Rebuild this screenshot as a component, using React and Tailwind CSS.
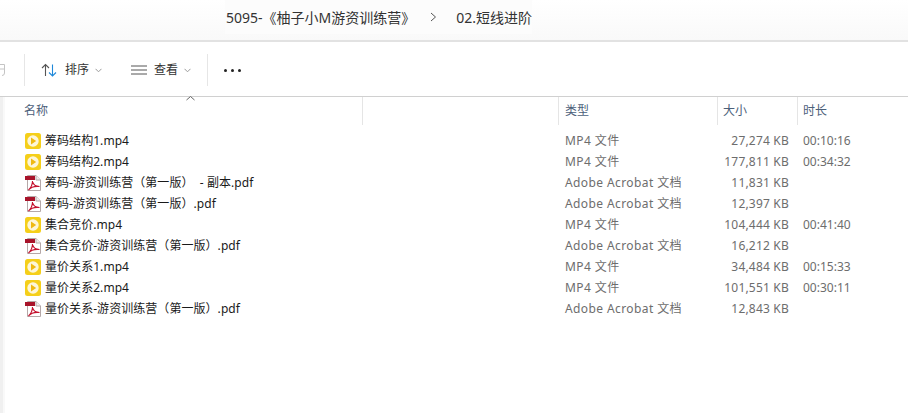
const files = [
  { name: "筹码结构1.mp4", kind: "video", type: "MP4 文件", size: "27,274 KB", time: "00:10:16" },
  { name: "筹码结构2.mp4", kind: "video", type: "MP4 文件", size: "177,811 KB", time: "00:34:32" },
  { name: "筹码-游资训练营（第一版） \u00a0- 副本.pdf", kind: "pdf", type: "Adobe Acrobat 文档", size: "11,831 KB", time: "" },
  { name: "筹码-游资训练营（第一版）.pdf", kind: "pdf", type: "Adobe Acrobat 文档", size: "12,397 KB", time: "" },
  { name: "集合竞价.mp4", kind: "video", type: "MP4 文件", size: "104,444 KB", time: "00:41:40" },
  { name: "集合竞价-游资训练营（第一版）.pdf", kind: "pdf", type: "Adobe Acrobat 文档", size: "16,212 KB", time: "" },
  { name: "量价关系1.mp4", kind: "video", type: "MP4 文件", size: "34,484 KB", time: "00:15:33" },
  { name: "量价关系2.mp4", kind: "video", type: "MP4 文件", size: "101,551 KB", time: "00:30:11" },
  { name: "量价关系-游资训练营（第一版）.pdf", kind: "pdf", type: "Adobe Acrobat 文档", size: "12,843 KB", time: "" },
];

const VideoIcon = () => (
  <svg width="16" height="16" viewBox="0 0 16 16" className="shrink-0">
    <rect x="0" y="0" width="16" height="16" rx="2.5" fill="#f5cf1a" />
    <circle cx="8" cy="8" r="5.7" fill="#fdf6d8" />
    <path d="M6 4.6 L11.2 8 L6 11.4 Z" fill="#efb912" />
  </svg>
);

const PdfIcon = () => (
  <svg width="16" height="16" viewBox="0 0 16 16" className="shrink-0">
    <path d="M2.5 .5 H11 L15.5 5 V15.5 H2.5 Z" fill="#fff" stroke="#b5a8a8" />
    <path d="M11 .5 V5 H15.5" fill="#eee" stroke="#b5a8a8" />
    <rect x="0" y="1" width="10" height="4" fill="#a8132a" />
    <path d="M7.5 6 C8 9 10 11.5 14.5 11.5 C10 11 6 12 3.5 15 C6 12.5 7.5 9 7.5 6 Z" fill="none" stroke="#c4122f" strokeWidth="1.1" />
  </svg>
);

const Chevron = () => (
  <svg width="7" height="5" viewBox="0 0 7 5" className="shrink-0">
    <path d="M.5 .8 L3.5 3.8 L6.5 .8" fill="none" stroke="#9a9a9a" strokeWidth="1" />
  </svg>
);

const ColHead = ({ className, label }) => (
  <div className={`h-[28px] flex items-center border-r border-[#e5e5e5] text-[12px] text-[#4c607a] ${className}`}>
    {label}
  </div>
);

export default function App() {
  return (
    <div
      className="w-[908px] h-[413px] overflow-hidden bg-white flex flex-col text-[12px] text-[#1a1a1a]"
      style={{ fontFamily: '"Noto Sans", "Noto Sans CJK SC", sans-serif' }}
    >
      {/* address bar */}
      <div className="h-[42px] shrink-0 bg-gradient-to-b from-white to-[#f9f9f9] border-b-2 border-[#e2e2e2] flex">
        <div className="w-[225px] shrink-0" />
        <div className="h-[34px] pl-[1px] flex items-center bg-[#fcfcfc] text-[14px] text-[#333] whitespace-nowrap">
          <span>5095-《柚子小M游资训练营》</span>
          <svg width="7" height="10" viewBox="0 0 7 10" className="ml-[15px] mr-[19px]">
            <path d="M1 1 L5.5 5 L1 9" fill="none" stroke="#555" strokeWidth="1" />
          </svg>
          <span>02.短线进阶</span>
        </div>
      </div>

      {/* toolbar */}
      <div className="h-[55px] shrink-0 border-b border-[#d0d0d0] flex items-center pt-[2px]">
        <div className="w-[25px] h-[32px] shrink-0 border-r border-[#e6e6e6] flex items-center overflow-hidden">
          <svg width="5" height="12" viewBox="0 0 5 12" className="shrink-0">
            <path d="M0 .5 H4.5 V9 Q4.5 11.5 2 11.5 M0 5 H4.5" fill="none" stroke="#c4c4c4" strokeWidth="1" />
          </svg>
        </div>
        <div className="flex items-center w-[183px] h-[32px] shrink-0 border-r border-[#e6e6e6] pl-[16px]">
          <svg width="16" height="16" viewBox="0 0 16 16" className="shrink-0">
            <path d="M4.5 14 V2.5 M1 6 L4.5 2.5 L8 6" fill="none" stroke="#555" strokeWidth="1.1" />
            <path d="M11.5 2.5 V14 M8 10.5 L11.5 14 L15 10.5" fill="none" stroke="#1e88d9" strokeWidth="1.1" />
          </svg>
          <span className="ml-[8px] text-[#333]">排序</span>
          <span className="ml-[6px]"><Chevron /></span>
          <svg width="16" height="10" viewBox="0 0 16 10" className="ml-[29px] shrink-0">
            <path d="M0 1 H16 M0 5 H16 M0 9 H16" stroke="#555" strokeWidth="1" />
          </svg>
          <span className="ml-[7px] text-[#333]">查看</span>
          <span className="ml-[6px]"><Chevron /></span>
        </div>
        <div className="ml-[16px] flex gap-[4px]">
          <div className="w-[3px] h-[3px] rounded-full bg-[#222]" />
          <div className="w-[3px] h-[3px] rounded-full bg-[#222]" />
          <div className="w-[3px] h-[3px] rounded-full bg-[#222]" />
        </div>
      </div>

      <div className="flex-1 flex min-h-0">
        {/* nav pane edge */}
        <div className="w-[3px] shrink-0 bg-[#f0f0f0]" />
        <div className="w-[2px] shrink-0 bg-[#f9f9f9]" />

        <div className="flex-1 min-w-0">
          {/* column headers */}
          <div className="relative flex">
            <svg width="9" height="5" viewBox="0 0 9 5" className="absolute left-[181px] top-[-1px]">
              <path d="M.5 4 L4.5 .5 L8.5 4" fill="none" stroke="#666" strokeWidth="1" />
            </svg>
            <ColHead className="w-[358px] pl-[19px]" label="名称" />
            <ColHead className="w-[196px]" label="" />
            <ColHead className="w-[159px] pl-[6px]" label="类型" />
            <ColHead className="w-[80px] pl-[5px]" label="大小" />
            <div className="h-[28px] flex items-center pl-[5px] text-[#4c607a]">时长</div>
          </div>

          {/* rows */}
          <div className="mt-[5px]">
            {files.map((f) => (
              <div key={f.name} className="h-[21px] flex items-center whitespace-nowrap">
                <div className="w-[553px] pl-[20px] flex items-center shrink-0">
                  {f.kind === "video" ? <VideoIcon /> : <PdfIcon />}
                  <span className="ml-[4px] tracking-[0.05px]">{f.name}</span>
                </div>
                <div className="w-[160px] pl-[7px] shrink-0 text-[#6d6d6d] tracking-[0.4px]">{f.type}</div>
                <div className="w-[71px] text-right shrink-0 text-[#6d6d6d] tracking-[0.2px]">{f.size}</div>
                <div className="pl-[14px] text-[#6d6d6d]">{f.time}</div>
              </div>
            ))}
          </div>
        </div>
      </div>
    </div>
  );
}
